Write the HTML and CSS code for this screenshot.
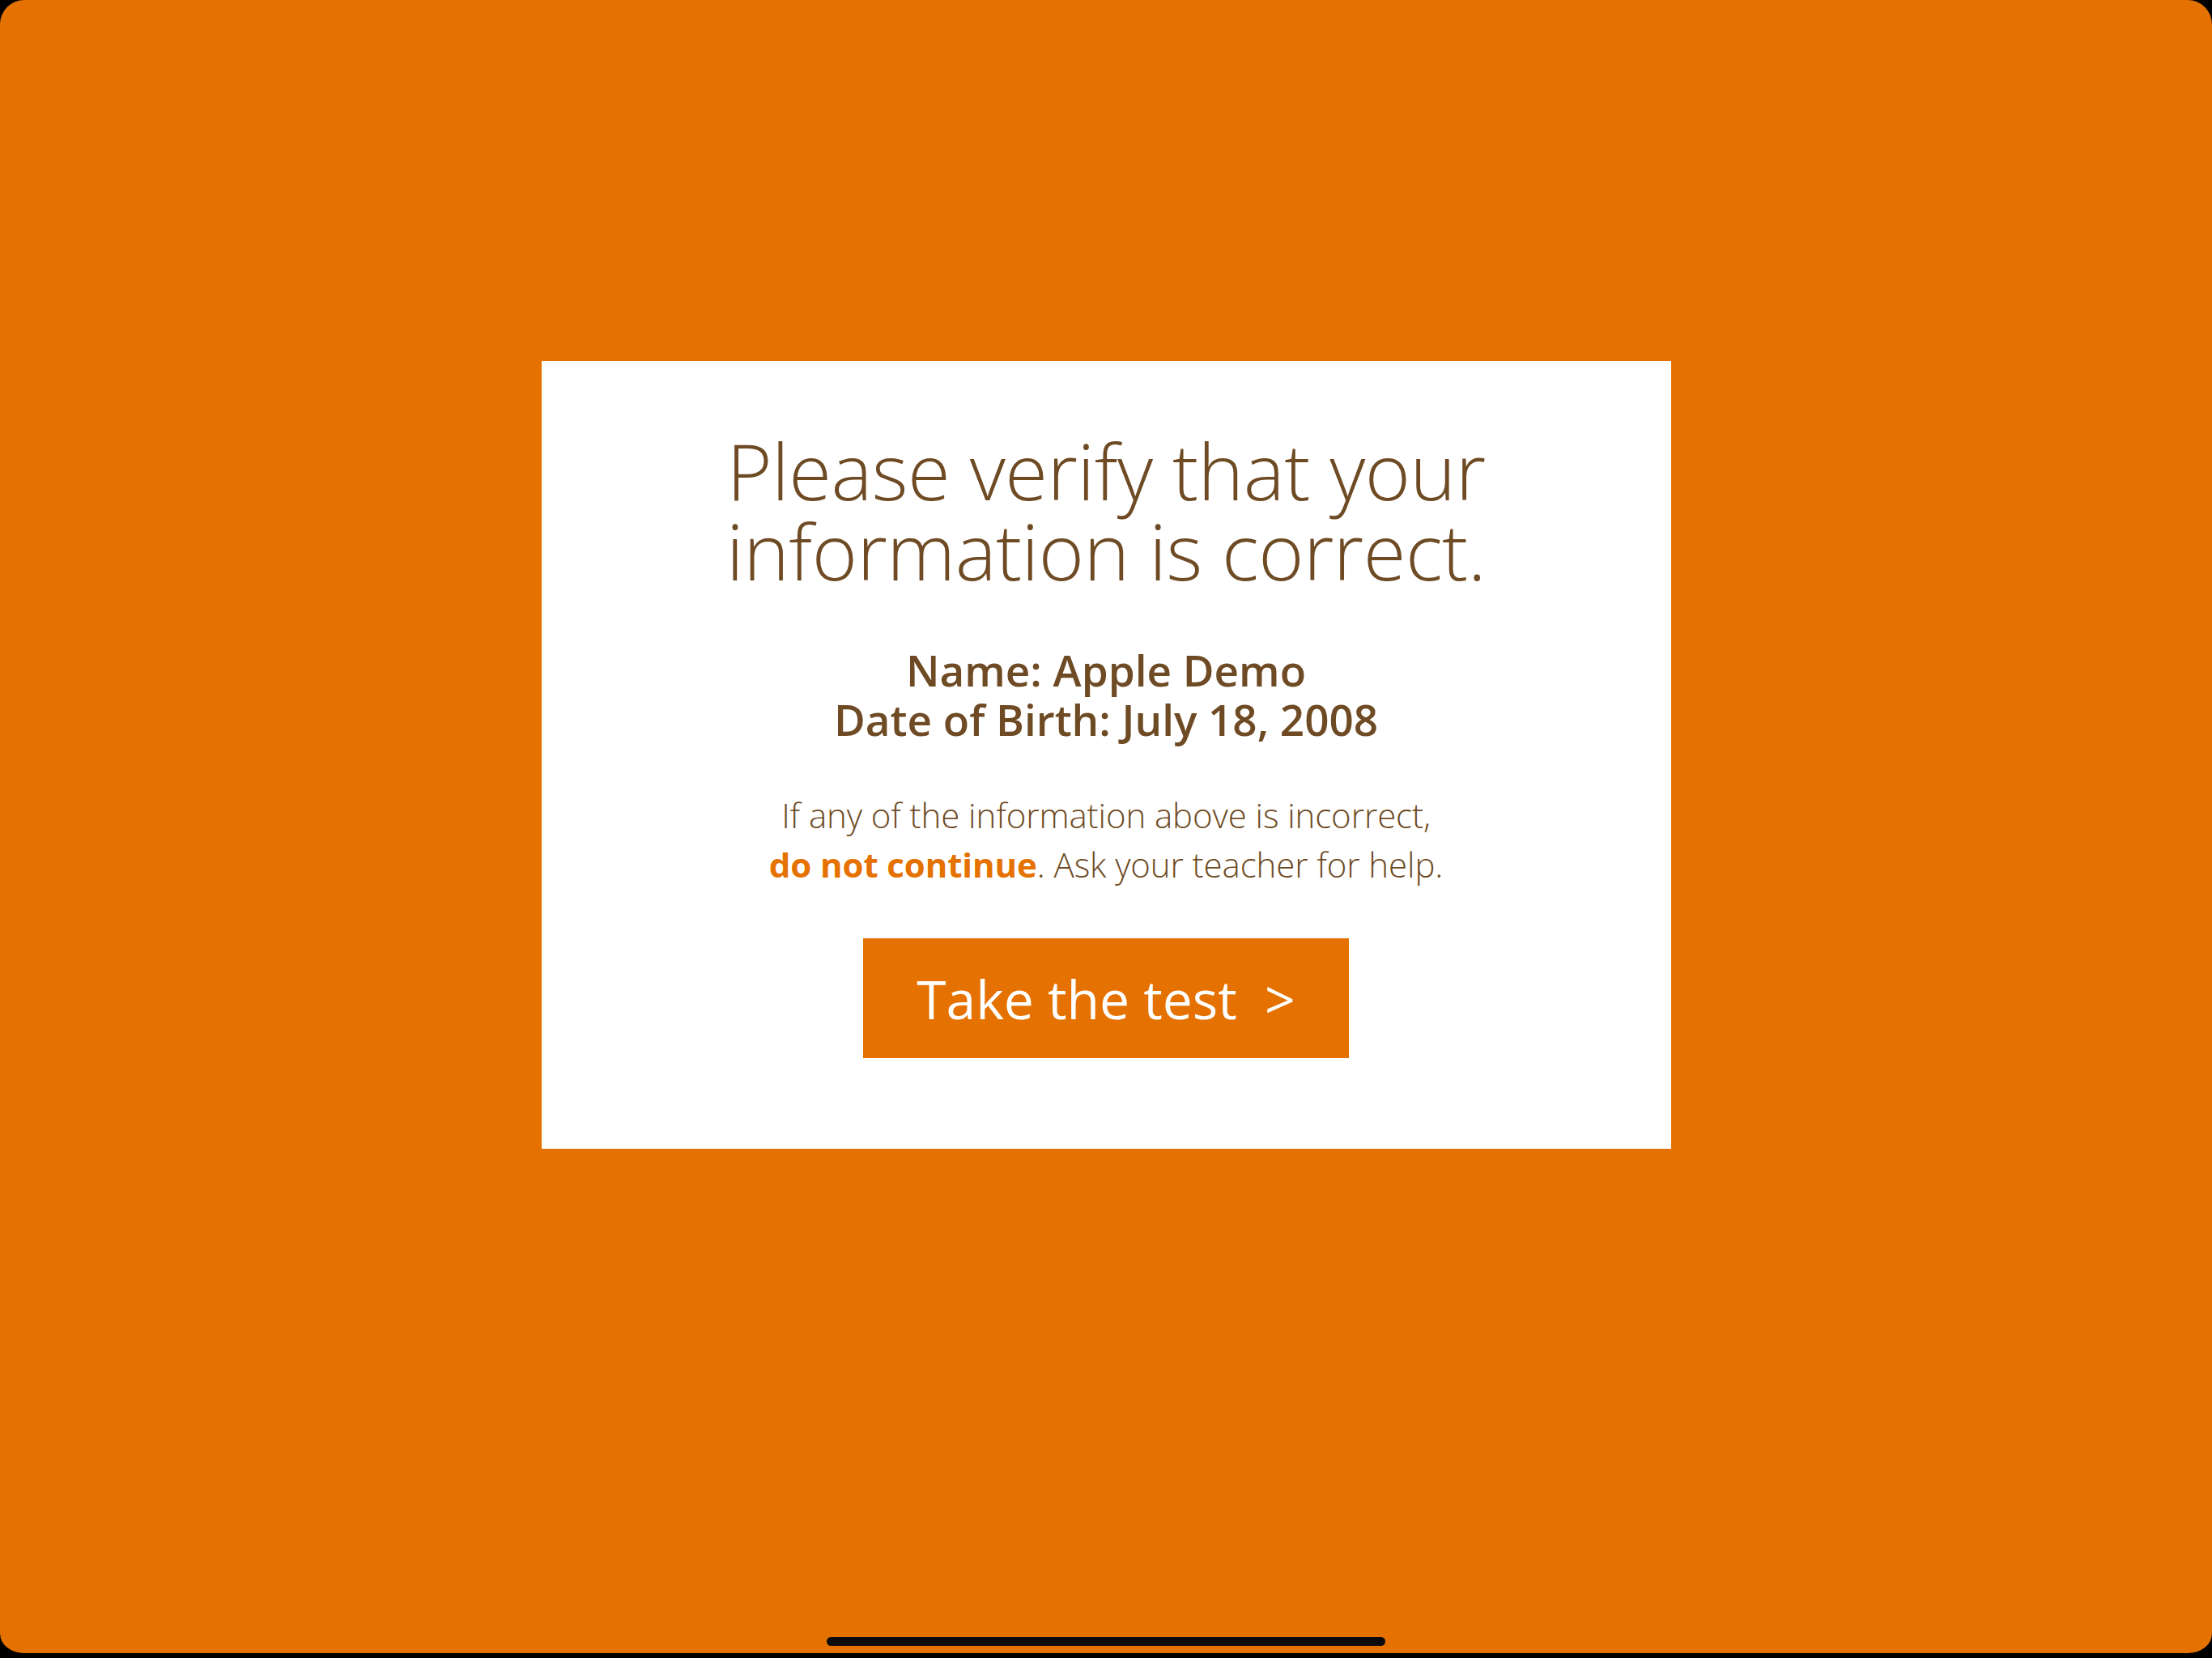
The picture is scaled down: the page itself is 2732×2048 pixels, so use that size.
FILE: index.html
```html
<!DOCTYPE html>
<html lang="en">
<head>
<meta charset="utf-8">
<title>Verify your information</title>
<link rel="stylesheet" href="styles.css">
</head>
<body>
<div class="screen">
  <main class="card">
    <h1 class="title">Please verify that your<br>information is correct.</h1>
    <p class="details">Name: Apple Demo<br>Date of Birth: July 18, 2008</p>
    <p class="note">If any of the information above is incorrect,<br><strong class="warn">do not continue</strong>. Ask your teacher for help.</p>
    <button class="cta" type="button">Take the test&nbsp;&nbsp;&gt;</button>
  </main>
  <div class="home-indicator"></div>
</div>
</body>
</html>
```
FILE: styles.css
```css
html, body {
  margin: 0;
  padding: 0;
}
body {
  width: 2732px;
  height: 2048px;
  background: #000;
  overflow: hidden;
  font-family: "Open Sans", "Noto Sans", sans-serif;
}
.screen {
  position: relative;
  width: 2732px;
  height: 2048px;
  background: #e57200;
  border-radius: 30px;
  box-sizing: border-box;
  padding-top: 446px;
  display: flex;
  flex-direction: column;
  align-items: center;
  border-bottom: 6px solid #000;
}
.card {
  width: 1395px;
  height: 973px;
  box-sizing: border-box;
  background: #fff;
  padding-top: 85px;
  display: flex;
  flex-direction: column;
  align-items: center;
  text-align: center;
  color: #6e4b24;
}
.title {
  margin: 0;
  font-weight: 300;
  font-size: 96px;
  letter-spacing: -0.5px;
  line-height: 99px;
}
.details {
  margin: 68px 0 0;
  font-weight: 600;
  font-size: 53px;
  line-height: 61px;
}
.note {
  margin: 57px 0 0;
  font-weight: 300;
  font-size: 42px;
  letter-spacing: -0.1px;
  line-height: 61px;
}
.warn {
  font-weight: 700;
  color: #e57200;
}
.cta {
  margin-top: 61px;
  width: 600px;
  height: 148px;
  border: 0;
  padding: 0;
  background: #e57200;
  color: #fff;
  font-family: "Open Sans", "Noto Sans", sans-serif;
  font-weight: 400;
  font-size: 66px;
  display: flex;
  align-items: center;
  justify-content: center;
}
.home-indicator {
  position: absolute;
  left: 1021px;
  top: 2022px;
  width: 690px;
  height: 11px;
  border-radius: 6px;
  background: #0b0b0b;
}
```
